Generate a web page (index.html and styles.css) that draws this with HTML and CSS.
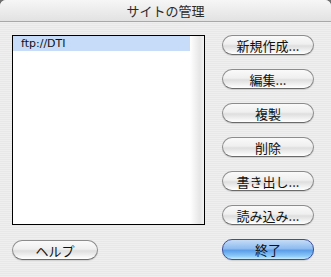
FILE: index.html
```html
<!DOCTYPE html>
<html lang="ja">
<head>
  <meta charset="UTF-8" />
  <title>サイトの管理</title>
  <link rel="stylesheet" href="styles.css">
</head>
<body>
  <div class="window">
    <div class="titlebar">サイトの管理</div>
    <div class="content">
      <div class="list">
        <div class="list-items">
          <div class="item selected">ftp://DTI</div>
        </div>
        <div class="list-edge"></div>
      </div>
      <div class="buttons">
        <button type="button">新規作成...</button>
        <button type="button">編集...</button>
        <button type="button">複製</button>
        <button type="button">削除</button>
        <button type="button">書き出し...</button>
        <button type="button">読み込み...</button>
      </div>
    </div>
    <div class="footer">
      <button type="button" class="help">ヘルプ</button>
      <button type="button" class="default">終了</button>
    </div>
  </div>
</body>
</html>
```

FILE: styles.css
```css
html, body {
  margin: 0;
  padding: 0;
}
body {
  width: 331px;
  height: 277px;
  background: #6f6f6f;
  font-family: "Noto Sans CJK JP", "DejaVu Sans", sans-serif;
  overflow: hidden;
}
.window {
  width: 331px;
  height: 277px;
  border-radius: 6px 6px 0 0;
  overflow: hidden;
  background-color: #ececec;
  background-image: repeating-linear-gradient(to bottom, #efefef 0, #efefef 1px, #e8e8e8 1px, #e8e8e8 2px);
}
.titlebar {
  height: 21px;
  line-height: 21px;
  text-align: center;
  font-size: 13px;
  color: #2a2a2a;
  background: linear-gradient(to bottom, #f6f6f6, #e2e2e2);
  border-bottom: 1px solid #a8a8a8;
}
.content {
  display: flex;
  gap: 17px;
  padding: 13px 17px 0 12px;
}
.list {
  display: flex;
  width: 193px;
  height: 190px;
  box-sizing: border-box;
  border: 1px solid #000;
  background: #fff;
}
.list-items {
  flex: 1;
}
.list-edge {
  width: 14px;
  background: linear-gradient(to right, #fff, #e6e6e6 70%, #f2f2f2);
}
.item {
  height: 15px;
  line-height: 15px;
  padding-left: 8px;
  font-family: "DejaVu Sans", sans-serif;
  font-size: 11px;
  color: #111;
}
.item.selected {
  background: #c6dcf8;
}
.buttons {
  display: flex;
  flex-direction: column;
  gap: 14px;
}
button {
  width: 92px;
  height: 20px;
  padding: 0;
  border: 1px solid #8c8c8c;
  border-bottom-color: #6a6a6a;
  border-radius: 10px;
  font-family: "Noto Sans CJK JP", sans-serif;
  font-size: 13px;
  line-height: 17px;
  color: #111;
  background: linear-gradient(to bottom, #fafafa 0, #efefef 45%, #dedede 55%, #f4f4f4 85%, #ffffff 100%);
  box-shadow: 0 1px 1px rgba(0,0,0,0.12);
}
.footer {
  display: flex;
  justify-content: space-between;
  align-items: flex-end;
  padding: 0 17px 0 12px;
  margin-top: 13px;
}
.help {
  width: 86px;
}
.default {
  margin-top: 1px;
  height: 21px;
  border-color: #3d4f9a;
  background: linear-gradient(to bottom, #c5dcf7 0, #8ebcf0 45%, #5c9ee8 55%, #8ccaf9 85%, #c9eaff 100%);
}
```
